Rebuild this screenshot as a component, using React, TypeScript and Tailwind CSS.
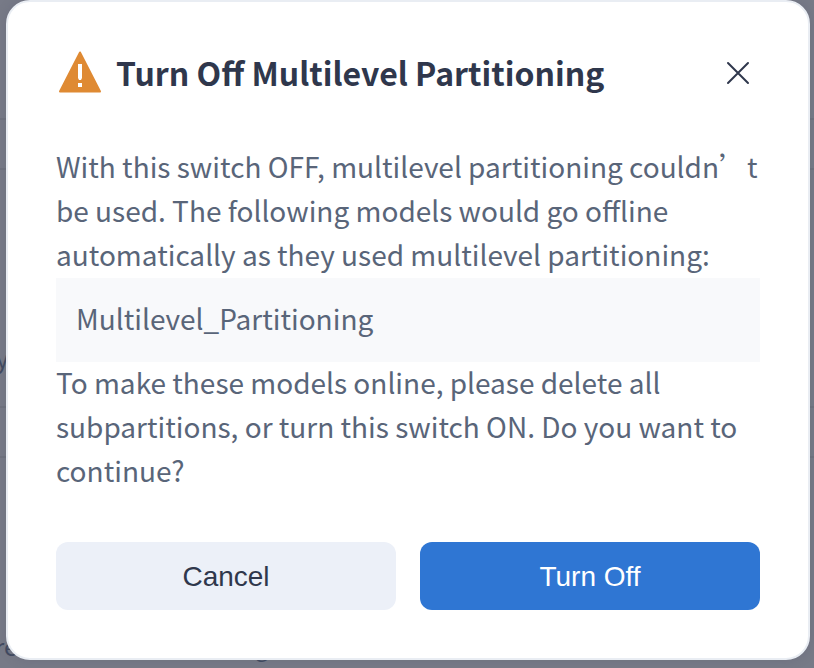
export default function App() {
  return (
    <div className="relative h-[668px] w-[814px] overflow-hidden bg-[#777a87] font-['Noto_Sans_CJK_SC',sans-serif]">
      <div className="absolute inset-0 flex flex-col text-[24px] leading-[40px] text-[#414a61]">
        <div className="h-[120px] shrink-0 border-b-2 border-[#6f727f]" />
        <div className="h-[50px] shrink-0 border-b-2 border-[#6f727f]" />
        <div className="flex h-[238px] shrink-0 items-end border-b-2 border-[#6f727f] pb-[28px]">
          <span className="-ml-[4px]">y</span>
        </div>
        <div className="h-[50px] shrink-0 border-b-2 border-[#6f727f]" />
        <div className="flex flex-1 items-end">
          <span className="-ml-[5px] w-[260px] pb-[2px]">re</span>
          <span className="pb-[2px]">g</span>
        </div>
      </div>
      <section className="relative ml-[6px] flex h-[660px] w-[804px] flex-col rounded-[24px] border-2 border-[#e9edf3] bg-white px-[48px] shadow-[0_0_12px_rgba(70,75,95,0.2)]">
        <header className="mt-[48px] flex h-[44px] items-center">
          <svg width="44" height="42" viewBox="0 0 44 42" className="mr-[14px] ml-[2px]">
            <path d="M22 1.5 42 40.5H2Z" fill="#df8a33" stroke="#df8a33" strokeWidth="2" strokeLinejoin="round" />
            <path d="M20 13h4v14l-1 2h-2l-1-2zM20 32h4v4h-4z" fill="white" />
          </svg>
          <h1 className="text-[32px] leading-[44px] font-bold whitespace-nowrap text-[#2f374c]">Turn Off Multilevel Partitioning</h1>
          <button aria-label="Close" className="mr-[10px] ml-auto pt-[2px]">
            <svg width="24" height="24" viewBox="0 0 24 24" className="block stroke-[#2f374c]" strokeWidth="2" strokeLinecap="round"><path d="m2 2 20 20M22 2 2 22" /></svg>
          </button>
        </header>
        <div className="mt-[50px] text-[28px] leading-[44px] whitespace-nowrap text-[#596579]">
          <p>With this switch OFF, multilevel partitioning couldn’t</p>
          <p>be used. The following models would go offline</p>
          <p>automatically as they used multilevel partitioning:</p>
          <div className="mt-[2px] h-[84px] bg-[#f8f9fb] px-5 pt-[18px]">Multilevel_Partitioning</div>
          <p className="-mt-[2px]">To make these models online, please delete all</p>
          <p>subpartitions, or turn this switch ON. Do you want to</p>
          <p>continue?</p>
        </div>
        <footer className="mt-[50px] flex gap-6 font-['Liberation_Sans',sans-serif] text-[28px]">
          <button className="h-[68px] flex-1 rounded-xl bg-[#ecf0f8] pt-[2px] text-[#2f374c]">Cancel</button>
          <button className="h-[68px] flex-1 rounded-xl bg-[#2f76d3] pt-[2px] text-white">Turn Off</button>
        </footer>
      </section>
    </div>
  );
}
